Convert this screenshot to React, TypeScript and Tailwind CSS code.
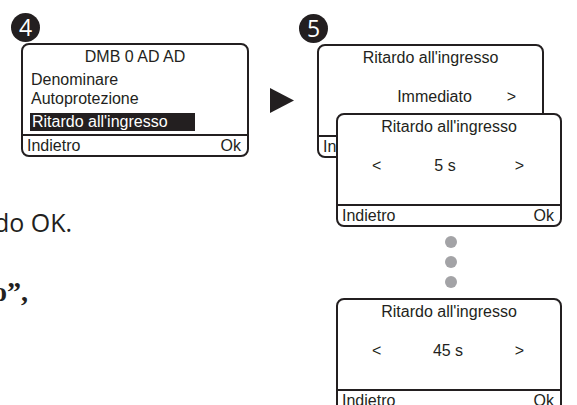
import React from 'react';

const ink = 'text-[#231f20]';

// Numbered step marker
const StepBadge: React.FC<{ n: string; className?: string }> = ({ n, className }) => (
  <div
    className={`flex h-[29px] w-[29px] items-center justify-center rounded-full bg-[#231f20] text-[23px] leading-none text-white ${className ?? ''}`}
    style={{ fontFamily: '"Open Sans", sans-serif' }}
  >
    {n}
  </div>
);

// Display screen of the keypad
const Screen: React.FC<{ title: string; className?: string; children?: React.ReactNode }> = ({ title, className, children }) => (
  <div className={`flex h-[114px] flex-col rounded-[8px] border-2 border-[#231f20] bg-white ${ink} ${className ?? ''}`}>
    <div className="pt-[2px] text-center text-[16px] leading-[19px]">{title}</div>
    <div className="flex-1">{children}</div>
    <div className="flex h-[21px] items-start justify-between border-t-2 border-[#231f20] pl-[4px] pr-[6px] text-[16px] leading-[19px]">
      <span>Indietro</span>
      <span>Ok</span>
    </div>
  </div>
);

const ValueRow: React.FC<{ value: string; left?: boolean; className?: string; valueClass?: string }> = ({
  value,
  left = true,
  className,
  valueClass,
}) => (
  <div className={`mt-[20px] flex items-center pl-[34px] text-[16px] leading-[19px] ${className ?? 'pr-[36px]'}`}>
    <span className={left ? '' : 'invisible'}>&lt;</span>
    <span className={`flex-1 text-center ${valueClass ?? ''}`}>{value}</span>
    <span>&gt;</span>
  </div>
);

const Dot = () => <div className="h-[12px] w-[12px] rounded-full bg-[#a3a3a6]" />;

export default function App() {
  return (
    <div
      className="flex h-[405px] w-[577px] overflow-hidden bg-white"
      style={{ fontFamily: '"Liberation Sans", Arial, sans-serif' }}
    >
      {/* step 4 */}
      <div className="w-[270px] shrink-0">
        <StepBadge n="4" className="ml-[11px] mt-[13px]" />
        <div className={`ml-[21px] mt-[1px] w-[228px] flex h-[114px] flex-col rounded-[8px] border-2 border-[#231f20] ${ink}`}>
          <div className="pt-[2px] text-center text-[16px] leading-[19px]">DMB 0 AD AD</div>
          <div className="flex-1 text-[16px] leading-[19px]">
            <div className="mt-[4px] pl-[8px]">Denominare</div>
            <div className="pl-[8px]">Autoprotezione</div>
            <div className="ml-[7px] mt-[5px] h-[18px] w-[165px] bg-[#231f20] pl-[2px] leading-[18px] text-white">
              Ritardo all'ingresso
            </div>
          </div>
          <div className="flex h-[21px] items-start justify-between border-t-2 border-[#231f20] pl-[4px] pr-[6px] text-[16px] leading-[19px]">
            <span>Indietro</span>
            <span>Ok</span>
          </div>
        </div>
        <p
          className={`ml-[-6px] mt-[50px] whitespace-nowrap text-[25px] leading-[30px] ${ink}`}
          style={{ fontFamily: '"Open Sans", sans-serif' }}
        >
          do OK.
        </p>
        <p
          className={`ml-[-7px] mt-[39px] whitespace-nowrap text-[28px] font-bold leading-[32px] ${ink}`}
          style={{ fontFamily: '"Liberation Serif", serif' }}
        >
          o”,
        </p>
      </div>

      {/* arrow */}
      <div className="mt-[88px] shrink-0">
        <svg width="24" height="25" viewBox="0 0 24 25">
          <polygon points="0,0 24,12.5 0,25" fill="#231f20" />
        </svg>
      </div>

      {/* step 5 */}
      <div className="ml-[5px] w-[278px] shrink-0">
        <StepBadge n="5" className="mt-[14px]" />
        <Screen title="Ritardo all'ingresso" className="ml-[18px] mt-[1px] w-[227px]">
          <ValueRow value="Immediato" left={false} className="pr-[26px]" />
        </Screen>
        <Screen title="Ritardo all'ingresso" className="relative ml-[37px] mt-[-45px] w-[226px]">
          <ValueRow value="5 s" valueClass="pr-[6px]" />
        </Screen>
        <div className="ml-[146px] mt-[9px] flex flex-col gap-[8px]">
          <Dot />
          <Dot />
          <Dot />
        </div>
        <Screen title="Ritardo all'ingresso" className="ml-[37px] mt-[10px] w-[226px]">
          <ValueRow value="45 s" />
        </Screen>
      </div>
    </div>
  );
}
